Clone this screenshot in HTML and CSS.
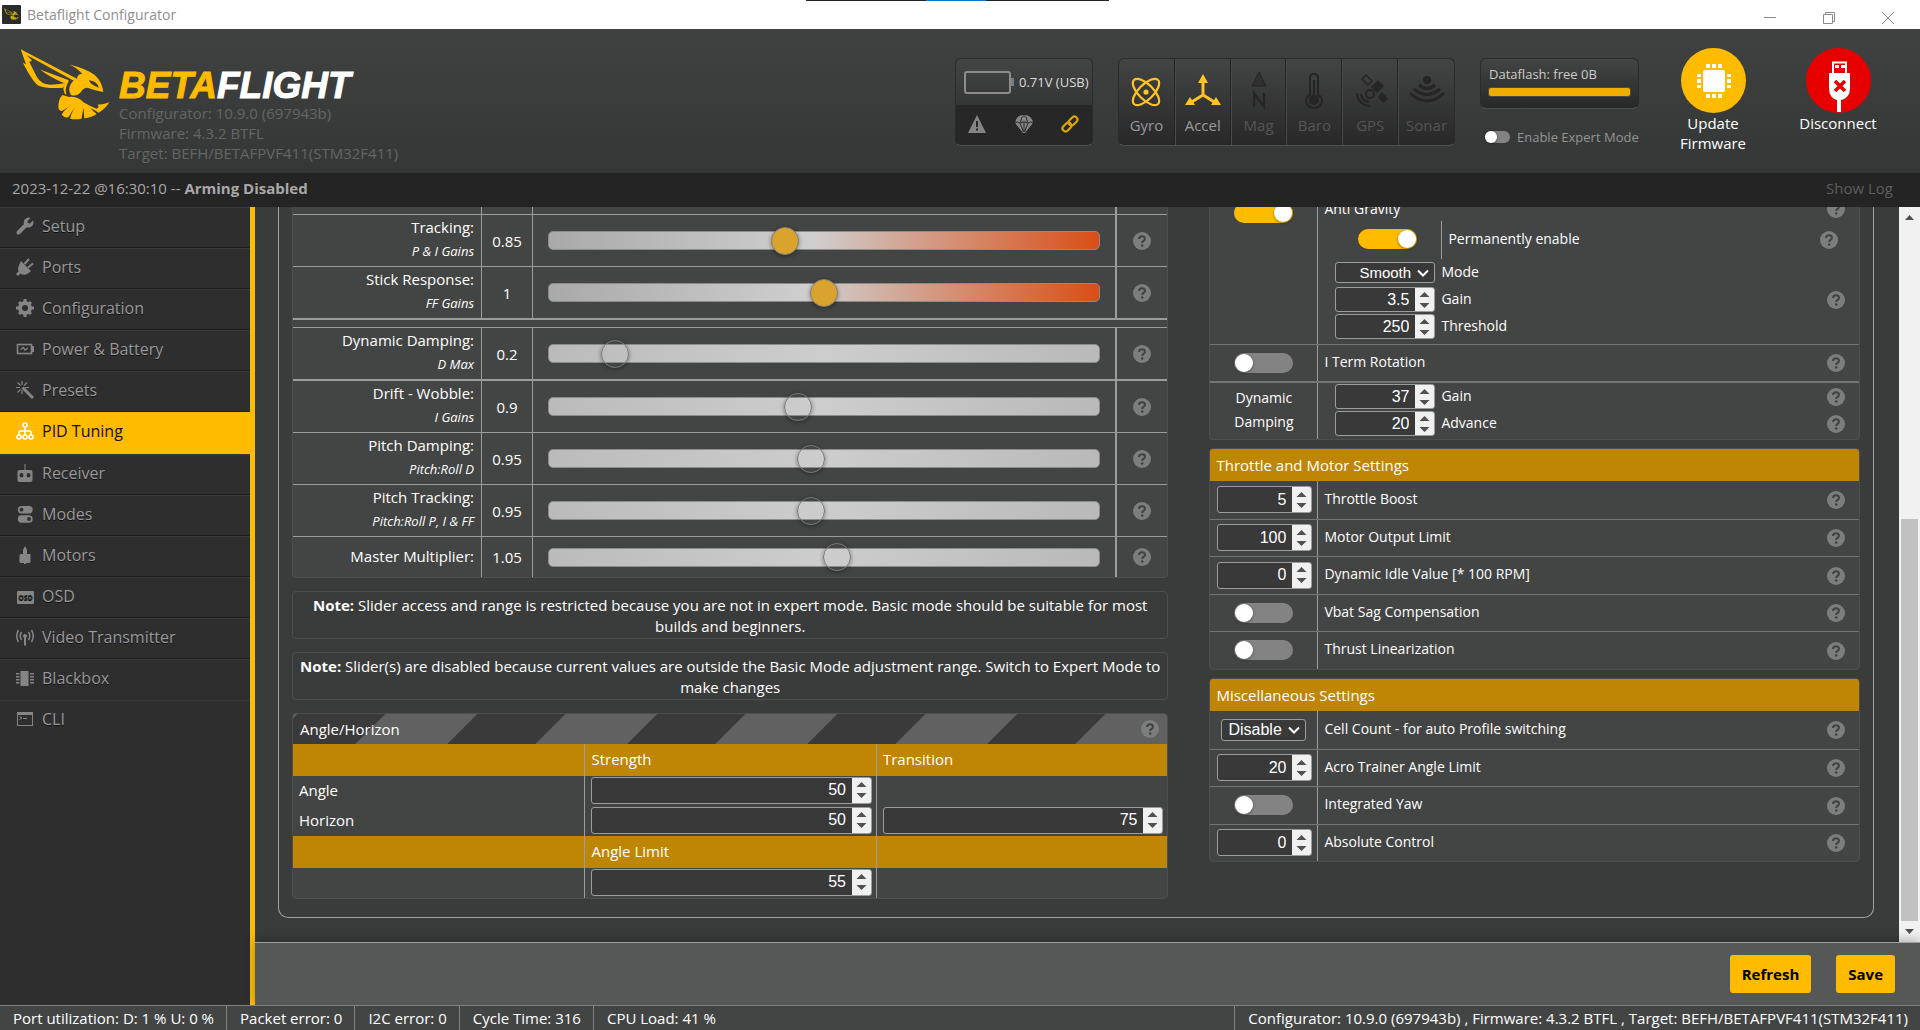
FILE: index.html
```html
<!DOCTYPE html>
<html lang="en">
<head>
<meta charset="utf-8">
<title>Betaflight Configurator</title>
<link rel="stylesheet" href="styles.css">
</head>
<body>
<svg class="defs" width="0" height="0" aria-hidden="true">
  <symbol id="wasp" viewBox="58 145 272 215">
    <path d="M60 146 L236 238 L226 244 L78 163 L94 180 L86 184 L108 228 Q122 252 148 253 Q170 253 196 248 L188 262 Q140 266 114 256 Q98 248 66 186 L76 192 Z"/>
    <path d="M118 207 L206 240 L196 250 Q150 232 118 207 Z"/>
    <path d="M208 192 Q262 206 284 224 Q306 244 310 275 Q288 272 262 262 Q248 262 242 276 Q230 290 212 284 Q202 268 212 250 Q220 238 230 238 Q230 222 246 220 Q232 204 208 192 Z M266 240 Q274 256 296 262 Q292 242 266 240 Z" fill-rule="evenodd"/>
    <path d="M206 242 Q190 246 189 266 Q190 278 198 285 Q192 262 206 242 Z"/>
    <path d="M186 284 Q172 300 174 324 Q178 338 190 330 L214 314 Q190 330 184 344 Q192 354 204 352 L226 318 Q210 344 210 356 Q226 360 244 356 L250 322 Q252 344 252 355 Q276 352 290 342 Q282 336 270 324 Q288 332 296 338 Q318 324 328 306 Q312 312 292 314 Q300 320 290 326 Q270 318 250 306 Q232 288 206 290 Z"/>
  </symbol>
  <symbol id="help" viewBox="0 0 18 18">
    <circle cx="9" cy="9" r="9" fill="#7c7e7d"/>
    <path d="M6 7 Q6 4.200 9 4.200 Q12 4.200 12 6.800 Q12 8.200 10.400 9 Q9.200 9.600 9.200 11" fill="none" stroke="#414342" stroke-width="2"/>
    <circle cx="9.200" cy="13.500" r="1.300" fill="#414342"/>
  </symbol>
</svg>

<div class="titlebar">
  <svg class="app-icon" viewBox="0 0 19 19"><rect width="19" height="19" rx="1" fill="#2b2b2b"/><use href="#wasp" x="2" y="3" width="15" height="12" fill="#ccae10"/></svg>
  <span class="app-name">Betaflight Configurator</span>
  <div class="top-strip"></div>
  <div class="window-buttons">
    <button aria-label="Minimize"><svg viewBox="0 0 12 12"><path d="M0 5.500H12"/></svg></button>
    <button aria-label="Restore"><svg viewBox="0 0 12 12"><path d="M.5 2.500H9.500V11.500H.5ZM2.500 2.500V.5H11.500V9.500H9.500"/></svg></button>
    <button aria-label="Close"><svg viewBox="0 0 12 12"><path d="M0 0L12 12M12 0L0 12"/></svg></button>
  </div>
</div>

<header class="header">
  <svg class="wasp"><use href="#wasp"/></svg>
  <div class="brand">
    <div class="wordmark">BETA<span>FLIGHT</span></div>
    <div>Configurator: 10.9.0 (697943b)</div>
    <div>Firmware: 4.3.2 BTFL</div>
    <div>Target: BEFH/BETAFPVF411(STM32F411)</div>
  </div>

  <div class="battery box">
    <div class="voltage">
      <svg viewBox="0 0 50 23" width="50" height="23"><rect x="1" y="1" width="45" height="21" rx="2" fill="none" stroke="#8c8c8c" stroke-width="2"/><rect x="47" y="7" width="3" height="8" fill="#7c7c7c"/></svg>
      <span>0.71V (USB)</span>
    </div>
    <div class="flags">
      <svg viewBox="0 0 18 18"><path d="M9 0L18 18H0ZM8 6V12H10V6ZM8 13.500V15.500H10V13.500Z" fill="#858585" fill-rule="evenodd"/></svg>
      <svg viewBox="0 0 18 18"><path d="M0 8Q1 0 9 0Q17 0 18 8L10 18H8Z" fill="#858585"/><path d="M0 8Q2.500 6 5 8Q9 5.500 13 8Q15.500 6 18 8M5 8L8.500 17M13 8L9.500 17M5.500 7Q6 2 9 .5Q12 2 12.500 7M9 7V17" fill="none" stroke="#272727"/></svg>
      <svg viewBox="0 0 18 18"><g fill="none" stroke="#dda307" stroke-width="2.200"><rect x="-5" y="-3" width="10" height="6" rx="3" transform="translate(12 6) rotate(-45)"/><rect x="-5" y="-3" width="10" height="6" rx="3" transform="translate(6 12) rotate(-45)"/></g></svg>
    </div>
  </div>

  <div class="sensors box">
    <div class="sensor on"><svg viewBox="0 0 36 36"><g fill="none" stroke="#ffc423" stroke-width="2.200"><ellipse cx="18" cy="18" rx="17" ry="7.500" transform="rotate(45 18 18)"/><ellipse cx="18" cy="18" rx="17" ry="7.500" transform="rotate(-45 18 18)"/></g><circle cx="18" cy="18" r="2.600" fill="#ffc423"/></svg>Gyro</div>
    <div class="sensor on"><svg viewBox="0 0 36 36"><path d="M18 21V6M18 21L5 29M18 21L31 29" stroke="#ffc423" stroke-width="3"/><path d="M18 0L23 9H13ZM0 31L5 23L10 31ZM36 31L31 23L26 31Z" fill="#ffc423"/></svg>Accel</div>
    <div class="sensor"><svg viewBox="0 0 36 36"><path d="M18-2L25 12H11Z" fill="#303030" stroke="#252525"/><path d="M13 33V19L23 33V19" fill="none" stroke="#252525" stroke-width="2.200"/></svg>Mag</div>
    <div class="sensor"><svg viewBox="0 0 36 36"><path d="M14 21V4Q14 0 18 0Q22 0 22 4V21Q26 23 26 27Q25 34 18 34Q11 34 10 27Q10 23 14 21Z" fill="none" stroke="#252525" stroke-width="2"/><path d="M17 6H19V21H17Z" fill="#252525"/><circle cx="18" cy="26" r="5" fill="#252525"/></svg>Baro</div>
    <div class="sensor"><svg viewBox="0 0 36 36"><g fill="#252525"><path d="M19 13L26 6L32 12L25 19ZM26 23L30 18L36 25L31 29Z"/><path d="M10 5L14 1L20 7L16 11Z" fill="none" stroke="#252525" stroke-width="1.500"/></g><g fill="none" stroke="#252525" stroke-width="2"><circle cx="18" cy="20" r="4"/><path d="M5 19Q6 31 18 32M9 20Q10 27 17 28"/></g></svg>GPS</div>
    <div class="sensor"><svg viewBox="0 0 36 36"><circle cx="18" cy="6" r="4" fill="#252525"/><g fill="none" stroke="#252525" stroke-width="3"><path d="M10 11Q18 18 26 11M5 15Q18 26 31 15M1 19Q18 35 35 19"/></g></svg>Sonar</div>
  </div>

  <div class="flash-col">
    <div class="flash box">
      <div>Dataflash: free 0B</div>
      <div class="flash-bar"></div>
    </div>
    <label class="expert"><input type="checkbox" class="switch small">Enable Expert Mode</label>
  </div>

  <div class="connect">
    <button><svg class="round gold" viewBox="0 0 65 65"><g fill="#fff"><rect x="22" y="22" width="22" height="22" rx="2"/><path d="M25 16h4v4h-4zM31 16h4v4h-4zM37 16h4v4h-4zM25 46h4v4h-4zM31 46h4v4h-4zM37 46h4v4h-4zM16 26h4v3h-4zM16 31h4v4h-4zM16 37h4v3h-4zM46 26h4v3h-4zM46 31h4v4h-4zM46 37h4v3h-4z"/></g></svg>Update Firmware</button>
    <button><svg class="round red" viewBox="0 0 65 65"><path d="M26 13.500H41V25H44V40Q44 50 35 52V64H31V52Q23 50 23 40V25H26Z" fill="#fff"/><path d="M28 15.500H39V25H28Z" fill="#e60000"/><path d="M29 17h4v3h-4zM35 17h4v3h-4z" fill="#fff"/><path d="M29 33L39 43M39 33L29 43" stroke="#e60000" stroke-width="3.500"/></svg>Disconnect</button>
  </div>
</header>

<div class="logbar">
  <div>2023-12-22 @16:30:10 -- <b>Arming Disabled</b></div>
  <a href="#log">Show Log</a>
</div>

<div class="main">
  <nav class="nav">
    <a href="#setup"><svg viewBox="0 0 18 18"><path d="M2.500 15.500L10 8" stroke-width="4" stroke-linecap="round" class="line"/><path d="M8 8Q7 3 10 1.500Q12 0 14.500 1L11.500 4L12 6L14 6.500L17 3.500Q18.500 7 15.500 9.500Q13 11 9.500 10Z"/></svg>Setup</a>
    <a href="#ports"><svg viewBox="0 0 18 18"><path d="M5 3L15 13Q9 19 4.500 15.500L2 18L0 16L2.500 13.500Q1 10 5 3Z"/><path d="M8.500 6L13 1M12 9.500L17 5.500" stroke-width="2" class="line"/></svg>Ports</a>
    <a href="#configuration"><svg viewBox="0 0 18 18"><circle cx="9" cy="9" r="5" stroke-width="4" class="line"/><path d="M7.500 0h3v3h-3zM7.500 15h3v3h-3zM0 7.500v3h3v-3zM15 7.500v3h3v-3zM2 4l2-2 3 3-2 2zM14 2l2 2-3 3-2-2zM2 14l2 2 3-3-2-2zM14 16l2-2-3-3-2 2z"/></svg>Configuration</a>
    <a href="#power"><svg viewBox="0 0 18 18"><rect x="1.500" y="4.500" width="14" height="9" class="line" stroke-width="1.600"/><path d="M16 6h2v6h-2z"/><path d="M4.500 9.500L7.500 7.500L9 10L12 8" class="line" stroke-width="1.400"/></svg>Power &amp; Battery</a>
    <a href="#presets"><svg viewBox="0 0 18 18"><path d="M6.500 6.500L17 17" stroke-width="3" class="line"/><path d="M6 0V4M0 6.500H4M9 6.500H13M6 9V13M1.500 1.500L4.500 4.500M11 1.500L8 4.500M1.500 11.500L4.500 8.500" stroke-width="1.200" class="line"/></svg>Presets</a>
    <a href="#pid" class="active"><svg viewBox="0 0 18 18"><g class="line" stroke-width="1.600"><circle cx="9" cy="3" r="2"/><circle cx="3" cy="15" r="2"/><circle cx="9" cy="15" r="2"/><circle cx="15" cy="15" r="2"/><path d="M9 5V13M3 13V10Q3 9 4 9H14Q15 9 15 10V13"/></g></svg>PID Tuning</a>
    <a href="#receiver"><svg viewBox="0 0 18 18"><path d="M8.500 0h1v6h-1z"/><path d="M3.500 6H14.500Q16.500 6 16.500 8V16Q16.500 18 14.500 18H3.500Q1.500 18 1.500 16V8Q1.500 6 3.500 6ZM5.500 9a2 2.200 0 100 4.400a2 2.200 0 100-4.400ZM12.500 9a2 2.200 0 100 4.400a2 2.200 0 100-4.400Z" fill-rule="evenodd"/></svg>Receiver</a>
    <a href="#modes"><svg viewBox="0 0 18 18"><path d="M5.500 1H13a3.700 3.700 0 010 7.400H5.500a3.700 3.700 0 010-7.400ZM5.500 2.800a1.900 1.900 0 100 3.800a1.900 1.900 0 100-3.800ZM5.500 10.300H13a3.700 3.700 0 010 7.400H5.500a3.700 3.700 0 010-7.400ZM13 12.100a1.900 1.900 0 100 3.800a1.900 1.900 0 100-3.800Z" fill-rule="evenodd"/></svg>Modes</a>
    <a href="#motors"><svg viewBox="0 0 18 18"><path d="M9 0L11 4V8H14.500V15.500Q14.500 17 13 17H10V18H8V17H5Q3.500 17 3.500 15.500V9.500Q3.500 8 5 8H7V4Z"/></svg>Motors</a>
    <a href="#osd"><svg viewBox="0 0 18 18"><rect x="1" y="4" width="17" height="13" rx="1"/><text x="9.500" y="13" class="osd">OSD</text></svg>OSD</a>
    <a href="#vtx"><svg viewBox="0 0 18 18"><circle cx="9" cy="8" r="2"/><path d="M8 9h2v8.500h-2z"/><path d="M5.500 4Q3 8 5.500 12M12.500 4Q15 8 12.500 12M2.500 2Q-1 8 2.500 14M15.500 2Q19 8 15.500 14" stroke-width="1.500" class="line"/></svg>Video Transmitter</a>
    <a href="#blackbox"><svg viewBox="0 0 18 18"><path d="M4.500 2H12.500V17H4.500ZM0 4h3.500v1.500H0zM0 7h3.500v1.500H0zM0 10h3.500v1.500H0zM0 13h3.500v1.500H0zM14 4h4v1.500h-4zM14 7h4v1.500h-4zM14 10h4v1.500h-4zM14 13h4v1.500h-4z"/></svg>Blackbox</a>
    <a href="#cli"><svg viewBox="0 0 18 18"><rect x="1.500" y="2.500" width="15" height="13" class="line" stroke-width="1"/><path d="M1 2h16v3H1z"/><path d="M3.500 6.500L6 8L3.500 9.500M7 8.500H11" class="line" stroke-width="1"/></svg>CLI</a>
  </nav>

  <div class="content">
    <div class="viewport">
      <div class="scroller">
        <div class="panel">
          <div class="column">
            <div class="card">
              <table class="sliders">
                <tr class="stub"><td></td><td></td><td></td><td></td></tr>
                <tr><th scope="row">Tracking:<i>P &amp; I Gains</i></th><td>0.85</td><td><input type="range" aria-label="Tracking" min="0" max="2" step="0.05" value="0.85"></td><td><svg class="help"><use href="#help"/></svg></td></tr>
                <tr><th scope="row">Stick Response:<i>FF Gains</i></th><td>1</td><td><input type="range" aria-label="Stick Response" min="0" max="2" step="0.05" value="1"></td><td><svg class="help"><use href="#help"/></svg></td></tr>
                <tr class="gap"><td colspan="4"></td></tr>
                <tr><th scope="row">Dynamic Damping:<i>D Max</i></th><td>0.2</td><td><input type="range" aria-label="Dynamic Damping" min="0" max="2" step="0.05" value="0.2" disabled></td><td><svg class="help"><use href="#help"/></svg></td></tr>
                <tr class="strong"><th scope="row">Drift - Wobble:<i>I Gains</i></th><td>0.9</td><td><input type="range" aria-label="Drift - Wobble" min="0" max="2" step="0.05" value="0.9" disabled></td><td><svg class="help"><use href="#help"/></svg></td></tr>
                <tr><th scope="row">Pitch Damping:<i>Pitch:Roll D</i></th><td>0.95</td><td><input type="range" aria-label="Pitch Damping" min="0" max="2" step="0.05" value="0.95" disabled></td><td><svg class="help"><use href="#help"/></svg></td></tr>
                <tr><th scope="row">Pitch Tracking:<i>Pitch:Roll P, I &amp; FF</i></th><td>0.95</td><td><input type="range" aria-label="Pitch Tracking" min="0" max="2" step="0.05" value="0.95" disabled></td><td><svg class="help"><use href="#help"/></svg></td></tr>
                <tr class="short"><th scope="row">Master Multiplier:</th><td>1.05</td><td><input type="range" aria-label="Master Multiplier" min="0" max="2" step="0.05" value="1.05" disabled></td><td><svg class="help"><use href="#help"/></svg></td></tr>
              </table>
            </div>

            <p class="note"><b>Note:</b> Slider access and range is restricted because you are not in expert mode. Basic mode should be suitable for most builds and beginners.</p>
            <p class="note"><b>Note:</b> Slider(s) are disabled because current values are outside the Basic Mode adjustment range. Switch to Expert Mode to make changes</p>

            <div class="card angle-card">
              <div class="striped"><span>Angle/Horizon</span><svg class="help"><use href="#help"/></svg></div>
              <table class="angles">
                <tr class="gold-row"><th></th><th scope="col">Strength</th><th scope="col">Transition</th></tr>
                <tr><th scope="row">Angle</th><td><input type="number" aria-label="Angle strength" value="50"></td><td></td></tr>
                <tr><th scope="row">Horizon</th><td><input type="number" aria-label="Horizon strength" value="50"></td><td><input type="number" aria-label="Horizon transition" value="75"></td></tr>
                <tr class="gold-row"><th></th><th scope="col">Angle Limit</th><th></th></tr>
                <tr><td></td><td><input type="number" aria-label="Angle limit" value="55"></td><td></td></tr>
              </table>
            </div>
          </div>

          <div class="column right">
            <div class="card first">
              <div class="row anti">
                <div class="ctl"><input type="checkbox" class="switch" id="ag" checked></div>
                <div class="body">
                  <div class="line-item title"><label for="ag">Anti Gravity</label><svg class="help"><use href="#help"/></svg></div>
                  <div class="permanent">
                    <div class="perm-ctl"><input type="checkbox" class="switch" id="perm" checked></div>
                    <label for="perm">Permanently enable</label>
                    <svg class="help"><use href="#help"/></svg>
                  </div>
                  <div class="line-item sub"><select id="mode"><option>Smooth</option></select><label for="mode">Mode</label></div>
                  <div class="line-item sub"><input type="number" id="again" value="3.5"><label for="again">Gain</label><svg class="help"><use href="#help"/></svg></div>
                  <div class="line-item sub"><input type="number" id="thr" value="250"><label for="thr">Threshold</label></div>
                </div>
              </div>
              <div class="row"><div class="ctl"><input type="checkbox" class="switch" id="iterm"></div><div class="body single"><label for="iterm">I Term Rotation</label><svg class="help"><use href="#help"/></svg></div></div>
              <div class="row damping">
                <div class="ctl">Dynamic Damping</div>
                <div class="body">
                  <div class="line-item sub"><input type="number" id="dgain" value="37"><label for="dgain">Gain</label><svg class="help"><use href="#help"/></svg></div>
                  <div class="line-item sub"><input type="number" id="dadv" value="20"><label for="dadv">Advance</label><svg class="help"><use href="#help"/></svg></div>
                </div>
              </div>
            </div>

            <div class="card">
              <h2>Throttle and Motor Settings</h2>
              <div class="row tall"><div class="ctl"><input type="number" id="tb" value="5"></div><div class="body single"><label for="tb">Throttle Boost</label><svg class="help"><use href="#help"/></svg></div></div>
              <div class="row"><div class="ctl"><input type="number" id="mol" value="100"></div><div class="body single"><label for="mol">Motor Output Limit</label><svg class="help"><use href="#help"/></svg></div></div>
              <div class="row tall"><div class="ctl"><input type="number" id="idle" value="0"></div><div class="body single"><label for="idle">Dynamic Idle Value [* 100 RPM]</label><svg class="help"><use href="#help"/></svg></div></div>
              <div class="row"><div class="ctl"><input type="checkbox" class="switch" id="vbat"></div><div class="body single"><label for="vbat">Vbat Sag Compensation</label><svg class="help"><use href="#help"/></svg></div></div>
              <div class="row tall"><div class="ctl"><input type="checkbox" class="switch" id="thrust"></div><div class="body single"><label for="thrust">Thrust Linearization</label><svg class="help"><use href="#help"/></svg></div></div>
            </div>

            <div class="card">
              <h2>Miscellaneous Settings</h2>
              <div class="row tall"><div class="ctl"><select id="cell"><option>Disable</option></select></div><div class="body single"><label for="cell">Cell Count - for auto Profile switching</label><svg class="help"><use href="#help"/></svg></div></div>
              <div class="row"><div class="ctl"><input type="number" id="acro" value="20"></div><div class="body single"><label for="acro">Acro Trainer Angle Limit</label><svg class="help"><use href="#help"/></svg></div></div>
              <div class="row tall"><div class="ctl"><input type="checkbox" class="switch" id="yaw"></div><div class="body single"><label for="yaw">Integrated Yaw</label><svg class="help"><use href="#help"/></svg></div></div>
              <div class="row"><div class="ctl"><input type="number" id="abs" value="0"></div><div class="body single"><label for="abs">Absolute Control</label><svg class="help"><use href="#help"/></svg></div></div>
            </div>
          </div>
        </div>
      </div>
      <div class="scrollbar">
        <svg viewBox="0 0 21 21"><path d="M6 13L10.500 8L15 13Z"/></svg>
        <div class="scroll-track"><div class="scroll-thumb"></div></div>
        <svg viewBox="0 0 21 21"><path d="M6 8L10.500 13L15 8Z"/></svg>
      </div>
    </div>
    <div class="toolbar"><button>Refresh</button><button>Save</button></div>
  </div>
</div>

<footer class="status">
  <span>Port utilization: D: 1 % U: 0 %</span><span>Packet error: 0</span><span>I2C error: 0</span><span>Cycle Time: 316</span><span>CPU Load: 41 %</span>
  <span class="versions">Configurator: 10.9.0 (697943b) , Firmware: 4.3.2 BTFL , Target: BEFH/BETAFPVF411(STM32F411)</span>
</footer>
</body>
</html>
```
FILE: styles.css
```css
* { box-sizing: border-box; }

body {
  margin: 0;
  height: 100vh;
  display: flex;
  flex-direction: column;
  overflow: hidden;
  background: #3a3c3b;
  color: #fff;
  font: 15px/20px "Open Sans", sans-serif;
}

button, input, select { font-family: inherit; margin: 0; }
.defs { position: absolute; }

/* Window title bar */
.titlebar {
  position: relative;
  flex: none;
  height: 29px;
  display: flex;
  align-items: center;
  padding: 0 26px 0 2px;
  background: #fff;
  color: #8f8f8f;
}
.app-icon { width: 19px; height: 19px; margin-right: 6px; }
.app-name { font-size: 14px; }
.top-strip {
  position: absolute;
  top: 0;
  left: 42%;
  width: 303px;
  height: 1px;
  background: linear-gradient(90deg, #222 120px, #0a78d0 120px, #0a78d0 180px, #222 180px);
}
.window-buttons { margin-left: auto; padding-top: 7px; display: flex; gap: 47px; }
.window-buttons button { padding: 0; border: 0; background: none; width: 12px; height: 12px; }
.window-buttons svg { display: block; fill: none; stroke: #8a8a8a; }

/* Header */
.header {
  flex: none;
  height: 144px;
  display: flex;
  align-items: flex-start;
  padding: 20px 37px 0 20px;
  background: linear-gradient(#3f4241, #353736);
}
.wasp { width: 90px; height: 71px; fill: #fb0; }
.brand { margin-left: 9px; color: #636665; flex: 1; }
.wordmark {
  margin: 19px 0 0;
  color: #fb0;
  font: italic bold 37px/35px "Liberation Sans", sans-serif;
  -webkit-text-stroke: 1px #fb0;
}
.wordmark span { color: #fff; -webkit-text-stroke: 1px #fff; }

.box {
  border: 1px solid #2a2b2b;
  border-bottom-color: #4e504f;
  border-radius: 6px;
  background: linear-gradient(#434444, #282828);
  overflow: hidden;
}
.battery { width: 138px; height: 88px; margin-top: 9px; }
.voltage { height: 46px; padding-left: 8px; display: flex; align-items: center; gap: 5px; font-size: 13px; color: #ddd; white-space: nowrap; }
.voltage svg { flex: none; }
.flags { height: 41px; padding: 0 13px 4px 12px; display: flex; align-items: center; justify-content: space-between; background: #272727; }
.flags svg { width: 18px; height: 18px; }

.sensors { margin: 9px 25px 0; width: 337px; height: 88px; display: grid; grid-template-columns: repeat(6, 1fr); }
.sensor { display: flex; flex-direction: column; align-items: center; padding-top: 15px; gap: 5px; border-left: 1px solid #484949; border-right: 1px solid #242424; color: #555; }
.sensor:first-child { border-left: 0; }
.sensor:last-child { border-right: 0; }
.sensor.on { color: #9a9a9a; }
.sensor svg { width: 36px; height: 36px; overflow: visible; }

.flash-col { width: 159px; margin-top: 9px; }
.flash { height: 51px; padding: 5px 8px; font-size: 13px; line-height: 20px; color: #ccc; }
.flash-bar { height: 8px; margin-top: 4px; border-radius: 2px; background: #efae00; box-shadow: 0 0 0 1px #4a4c4b; }
.expert { display: flex; align-items: center; gap: 7px; margin: 18px 0 0 5px; font-size: 13px; color: #949494; white-space: nowrap; }

.connect { display: flex; align-items: flex-start; gap: 35px; margin-left: 29px; }
.connect button { width: 90px; padding: 0; border: 0; background: none; color: #fff; font-size: 15px; line-height: 20px; }
.round { display: block; width: 65px; height: 65px; margin: -1px auto 0; border-radius: 50%; }
.gold { background: #fb0; }
.red { background: #e60000; }

.logbar {
  flex: none;
  height: 34px;
  display: flex;
  align-items: center;
  justify-content: space-between;
  padding: 0 27px 4px 12px;
  background: #242424;
  color: #a8a8a8;
}
.logbar a { color: #5e5e5e; text-decoration: none; }

/* Navigation */
.main { flex: 1; min-height: 0; display: flex; }
.nav { flex: none; width: 255px; background: #2e2e2e; border-right: 5px solid #fb0; }
.nav a {
  height: 41px;
  display: flex;
  align-items: center;
  gap: 8px;
  padding: 0 16px 4px;
  border-top: 1px solid #3a3a3a;
  border-bottom: 1px solid #1e1e1e;
  color: #999;
  font-size: 16px;
  text-decoration: none;
  text-shadow: 0 1px #111;
}
.nav a:nth-last-child(-n+2) { border-bottom-color: transparent; }
.nav svg { width: 18px; height: 18px; fill: #858585; }
.nav .line { fill: none; stroke: #858585; }
.nav .osd { font: bold 7px "Open Sans", sans-serif; text-anchor: middle; fill: #2e2e2e; }
.nav .active { height: 42px; background: #fb0; border-color: #fb0; color: #111; text-shadow: none; }
.nav .active .line { stroke: #fff; }

/* Content */
.content { flex: 1; min-width: 0; display: flex; flex-direction: column; }
.viewport { flex: 1; min-height: 0; display: flex; }
.scroller { flex: 1; overflow: hidden; padding: 0 25px 0 23px; }
.panel {
  margin-top: -10px;
  padding: 0 13px 18px;
  display: grid;
  grid-template-columns: minmax(0, 877fr) minmax(0, 651fr);
  gap: 41px;
  border: 1px solid #a0a2a1;
  border-top: 0;
  border-radius: 0 0 10px 10px;
}
.card { border: 1px solid #4d4f4e; border-radius: 4px; background: #434544; overflow: hidden; }
.help { display: block; width: 18px; height: 18px; }

table { width: 100%; border-collapse: separate; border-spacing: 0; table-layout: fixed; }
th, td { padding: 0; font-weight: normal; }

.card:first-child { border-top: 0; border-radius: 0 0 4px 4px; }
.sliders tr { height: 52px; }
.sliders th, .sliders td { border-top: 1px solid #9b9d9c; text-align: center; }
.sliders th { padding: 0 7px 3px 0; text-align: right; line-height: 24px; }
.sliders i { display: block; font-size: 13px; }
.sliders td { border-left: 1px solid #9b9d9c; }
.sliders td:last-child { border-left-width: 2px; }
.sliders td:nth-child(3) { padding: 0 15px; }
.sliders .help { margin: auto; }
.sliders .stub { height: 17px; }
.sliders .stub td { border-top: 0; }
.sliders .stub td:nth-child(1) { width: 188px; border-left: 0; }
.sliders .stub td:nth-child(2) { width: 51px; }
.sliders .stub td:nth-child(4) { width: 52px; }
.sliders .gap { height: 9px; }
.sliders .gap td { border-left: 0; border-top-width: 2px; padding: 0; }
.sliders .strong th, .sliders .strong td { border-top-width: 2px; }
.sliders .short { height: 41px; }

input[type="range"] {
  appearance: none;
  display: block;
  width: 100%;
  height: 19px;
  border: 1px solid #8c8c8c;
  border-radius: 5px;
  background: linear-gradient(90deg, #a9a9a9, #cfcfcf 48%, #d94e16);
}
input[type="range"]:disabled { background: linear-gradient(90deg, #bbb, #cdcdcd 50%, #b9b9b9); }
input[type="range"]::-webkit-slider-thumb {
  appearance: none;
  width: 28px;
  height: 28px;
  border: 1px solid #85807a;
  border-radius: 50%;
  background: #d9a32e;
  box-shadow: 0 1px 4px #0006;
}
input[type="range"]:disabled::-webkit-slider-thumb { background: transparent; border-color: #777; }

.note {
  margin: 13px 0 0;
  padding: 3px 4px 1px;
  border: 1px solid #4d4f4e;
  border-radius: 4px;
  text-align: center;
  font-size: 15px;
  line-height: 21px;
}
.angle-card { margin-top: 13px; }

.striped {
  height: 30px;
  padding: 0 8px 0 7px;
  display: flex;
  align-items: center;
  justify-content: space-between;
  background: linear-gradient(135deg, #3a3a3a 62px, #616161 63px, #616161 127px, #3a3a3a 128px) 4px 0 / 180px 30px;
}
.gold-row { background: #bf8606; }
.angles tr { height: 30px; }
.angles .gold-row { height: 32px; }
.angles th, .angles td { padding: 0 6px 2px; text-align: left; }
.angles th + *, .angles td + * { border-left: 1px solid #9b9d9c; }
.angles td { padding-right: 4px; }
.angles input { width: 100%; }

input[type="number"], select {
  border: 1px solid #9c9c9c;
  border-radius: 3px;
  color: #fff;
  font: 16px/20px "Liberation Sans", sans-serif;
}
input[type="number"] {
  appearance: textfield;
  display: block;
  height: 27px;
  padding: 0 25px 0 4px;
  text-align: right;
  background:
    url("data:image/svg+xml,%3Csvg xmlns='http://www.w3.org/2000/svg' width='19' height='20'%3E%3Cpath d='M4.500 7L9.500 2L14.500 7ZM4.500 13L9.500 18L14.500 13Z' fill='%23505050'/%3E%3C/svg%3E") right center / 19px 20px no-repeat,
    linear-gradient(#f0f0f0, #f0f0f0) right center / 19px 100% no-repeat,
    #393939;
}
input::-webkit-inner-spin-button { appearance: none; display: none; }
select {
  appearance: none;
  height: 22px;
  padding: 0 22px 0 6px;
  background: #393939 url("data:image/svg+xml,%3Csvg xmlns='http://www.w3.org/2000/svg' width='12' height='8'%3E%3Cpath d='M1 1.500L6 6.500L11 1.500' fill='none' stroke='white' stroke-width='2'/%3E%3C/svg%3E") right 5px center no-repeat;
}

.switch {
  appearance: none;
  flex: none;
  display: block;
  width: 59px;
  height: 20px;
  padding: 1px;
  border-radius: 10px;
  background: #838383;
}
.switch::before { content: ""; display: block; width: 18px; height: 18px; border-radius: 50%; background: #fff; box-shadow: 0 1px 3px #0006; }
.switch:checked { background: #fb0; }
.switch:checked::before { margin-left: auto; }
.switch.small { width: 25px; height: 12px; padding: 0; }
.switch.small::before { width: 12px; height: 12px; }

/* Right column */
.right { font-size: 14px; }
.right .card { margin-bottom: 8px; }
.right h2 { margin: 0; height: 32px; padding: 0 6px; font-size: 15px; font-weight: normal; line-height: 33px; background: #bf8606; }
.row { display: flex; height: 37px; }
.row.tall { height: 38px; }
.row + .row { border-top: 1px solid #737574; }
.ctl { flex: none; width: 107px; padding-bottom: 1px; display: flex; align-items: center; justify-content: center; text-align: center; }
.ctl input[type="number"] { width: 95px; margin-left: 2px; }
.ctl select { width: 85px; }
.body { flex: 1; border-left: 1px solid #9b9d9c; padding-right: 14px; }
.body.single { display: flex; align-items: center; justify-content: space-between; padding-left: 6px; }
.body.single label { padding-bottom: 3px; }
.row.anti { height: 147px; }
.anti .ctl { align-items: flex-start; padding-top: 6px; }
.line-item { display: flex; align-items: center; height: 27px; }
.line-item .help { margin-left: auto; }
.line-item.title { height: 24px; padding-left: 6px; }
.line-item.sub { padding-left: 17px; gap: 6px; }
.line-item.sub label { padding-bottom: 1px; }
.sub input[type="number"] { width: 100px; height: 25px; }
.sub select { width: 100px; height: 21px; padding-left: 23px; font-size: 15px; }
.permanent { height: 38px; padding: 0 7px 0 0; display: flex; align-items: center; }
.permanent label { padding-bottom: 2px; }
.perm-ctl { height: 38px; width: 124px; padding: 0 24px 2px 0; display: flex; align-items: center; justify-content: flex-end; border-right: 1px solid #9b9d9c; margin-right: 6px; }
.permanent .help { margin-left: auto; }
.row.damping { height: 58px; border-top-width: 2px; }
.damping .ctl { line-height: 24px; padding: 0 20px 2px; }

/* Scroll bar */
.scrollbar { flex: none; width: 21px; display: flex; flex-direction: column; background: #f1f1f1; }
.scrollbar svg { width: 21px; height: 21px; fill: #505050; }
.scroll-track { flex: 1; display: flex; flex-direction: column; justify-content: flex-end; padding: 0 2px; }
.scroll-thumb { height: 58%; background: #c1c1c1; }

.toolbar {
  flex: none;
  height: 63px;
  display: flex;
  align-items: center;
  justify-content: flex-end;
  gap: 25px;
  padding: 0 25px 0 0;
  background: #565857;
  border-top: 1px solid #a0a2a1;
  box-shadow: 0 -2px 10px #0004;
}
.toolbar button { height: 38px; padding: 0 12px; border: 0; border-radius: 3px; background: #fb0; color: #000; font-size: 15px; font-weight: bold; }

.status { flex: none; height: 25px; display: flex; background: #434544; border-top: 1px solid #808281; line-height: 25px; white-space: nowrap; }
.status span { padding: 0 12px 0 13px; border-right: 1px solid #808281; }
.status span:nth-child(5) { border-right: 0; }
.status .versions { margin-left: auto; border-right: 0; border-left: 1px solid #808281; }
```
